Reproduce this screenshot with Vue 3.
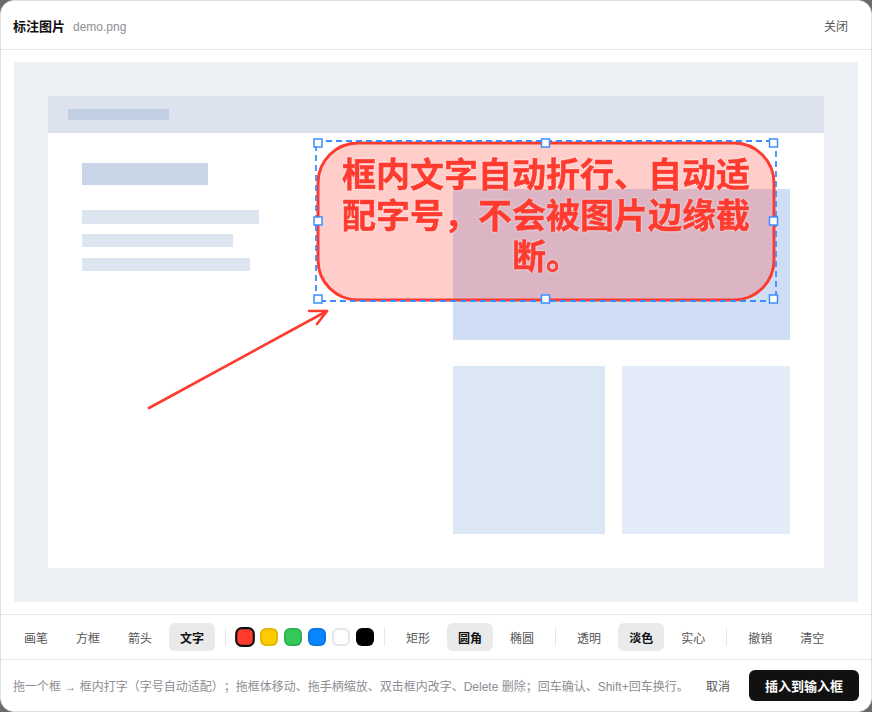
<template>
  <div class="modal">
    <header class="head">
      <div class="title-wrap">
        <span class="title">标注图片</span>
        <span class="file">demo.png</span>
      </div>
      <button class="close">关闭</button>
    </header>

    <div class="body">
      <svg class="stage" viewBox="14 62 844 540" width="844" height="540">
        <rect x="14" y="62" width="844" height="540" fill="#edf1f6" />
        <rect x="48" y="96" width="776" height="472" fill="#fff" />
        <rect x="48" y="96" width="776" height="37" fill="#dce3ee" />
        <rect x="68" y="109" width="101" height="11" fill="#c3cfe2" />
        <rect x="82" y="163" width="126" height="22" fill="#c8d5e7" />
        <rect x="82" y="210" width="177" height="14" fill="#dce5f0" />
        <rect x="82" y="234" width="151" height="13" fill="#dce5f0" />
        <rect x="82" y="258" width="168" height="13" fill="#dce5f0" />
        <rect x="453" y="189" width="337" height="151" fill="#cfdef4" />
        <rect x="453" y="366" width="152" height="168" fill="#dce7f6" />
        <rect x="622" y="366" width="168" height="168" fill="#e4ebf8" />

        <g class="arrow">
          <path d="M149 408 L327 311" />
          <path d="M309 311 L327 311 L317 324" />
        </g>

        <rect class="shape" x="318" y="143" width="456" height="157" rx="40" />
        <text class="label" text-anchor="middle">
          <tspan x="546" y="186.5">框内文字自动折行、自动适</tspan>
          <tspan x="546" y="228">配字号，不会被图片边缘截</tspan>
          <tspan x="546" y="269">断。</tspan>
        </text>

        <rect class="select" x="316" y="141" width="460" height="160" />
        <rect v-for="h in handles" :key="h.x + '-' + h.y" class="handle" :x="h.x - 4" :y="h.y - 4" width="8" height="8" />
      </svg>
    </div>

    <div class="toolbar">
      <button v-for="t in tools" :key="t" class="tool" :class="{ on: t === '文字' }">{{ t }}</button>
      <i class="sep" />
      <div class="swatches">
        <span v-for="c in colors" :key="c.value" class="swatch" :class="{ picked: c.picked }" :style="{ background: c.value }" />
      </div>
      <i class="sep" />
      <button v-for="t in shapes" :key="t" class="tool" :class="{ on: t === '圆角' }">{{ t }}</button>
      <i class="sep" />
      <button v-for="t in fills" :key="t" class="tool" :class="{ on: t === '淡色' }">{{ t }}</button>
      <i class="sep" />
      <button class="tool">撤销</button>
      <button class="tool">清空</button>
    </div>

    <footer class="foot">
      <span class="hint">拖一个框 → 框内打字（字号自动适配）；拖框体移动、拖手柄缩放、双击框内改字、Delete 删除；回车确认、Shift+回车换行。</span>
      <button class="cancel">取消</button>
      <button class="insert">插入到输入框</button>
    </footer>
  </div>
</template>

<script setup>
const tools = ['画笔', '方框', '箭头', '文字']
const shapes = ['矩形', '圆角', '椭圆']
const fills = ['透明', '淡色', '实心']
const colors = [
  { value: '#ff3b30', picked: true },
  { value: '#ffcc00' },
  { value: '#34c759' },
  { value: '#0a84ff' },
  { value: '#ffffff' },
  { value: '#000000' }
]
const handles = [
  { x: 318, y: 143 }, { x: 545.5, y: 143 }, { x: 773.5, y: 143 },
  { x: 318, y: 221 }, { x: 773.5, y: 221 },
  { x: 318, y: 299 }, { x: 545.5, y: 299 }, { x: 773.5, y: 299 }
]
</script>

<style>
html, body { background: #6b6b6b; }
</style>

<style scoped>
.modal {
  width: 872px;
  height: 712px;
  box-sizing: border-box;
  display: flex;
  flex-direction: column;
  background: #fff;
  border: 1px solid #e0e0e2;
  border-radius: 14px;
  overflow: hidden;
  font-family: "Liberation Sans", "Noto Sans CJK SC", sans-serif;
  color: #111;
}
.head {
  height: 49px;
  flex: none;
  box-sizing: border-box;
  display: flex;
  align-items: center;
  justify-content: space-between;
  padding: 0 11px 0 12px;
  border-bottom: 1px solid #e6e7e9;
}
.title-wrap { display: flex; align-items: baseline; gap: 8px; }
.title { font-size: 13px; font-weight: 700; }
.file { font-size: 12px; color: #8e8e93; }
button {
  font-family: inherit;
  border: 0;
  background: none;
  padding: 0;
  cursor: pointer;
}
.close {
  height: 28px;
  padding: 0 12px;
  font-size: 12px;
  color: #555;
}
.body {
  flex: 1;
  padding: 12px 13px;
  min-height: 0;
}
.stage { display: block; }
.arrow path {
  fill: none;
  stroke: #ff3b30;
  stroke-width: 2.6;
  stroke-linecap: round;
  stroke-linejoin: round;
}
.shape {
  fill: rgba(255, 59, 48, 0.25);
  stroke: #ff3b30;
  stroke-width: 3;
}
.label {
  font-family: "Noto Sans CJK SC", sans-serif;
  font-size: 34px;
  font-weight: 700;
  fill: #ff3b30;
  stroke: #ff3b30;
  stroke-width: 0.5px;
  filter: drop-shadow(0 0 1px rgba(255, 255, 255, 0.8));
}
.select {
  fill: none;
  stroke: #3b8eff;
  stroke-width: 1.8;
  stroke-dasharray: 6 4;
}
.handle {
  fill: #fff;
  stroke: #3b8eff;
  stroke-width: 1.5;
}
.toolbar {
  height: 45px;
  flex: none;
  box-sizing: border-box;
  display: flex;
  align-items: center;
  gap: 6px;
  padding: 0 12px;
  border-top: 1px solid #e6e7e9;
}
.tool {
  height: 28px;
  padding: 0 11px;
  border-radius: 6px;
  font-size: 12px;
  color: #555;
}
.tool.on {
  background: #e9eaec;
  color: #111;
  font-weight: 700;
}
.sep {
  width: 1px;
  height: 18px;
  margin: 0 4px;
  background: #e6e7e9;
}
.swatches { display: flex; align-items: center; gap: 6px; }
.swatch {
  width: 18px;
  height: 18px;
  box-sizing: border-box;
  border-radius: 6px;
  border: 2px solid rgba(0, 0, 0, 0.1);
}
.swatch.picked {
  transform: scale(1.1);
  border-color: #111;
}
.foot {
  height: 52px;
  flex: none;
  box-sizing: border-box;
  display: flex;
  align-items: center;
  padding: 0 12px;
  border-top: 1px solid #e6e7e9;
}
.hint {
  flex: 1;
  font-size: 12px;
  color: #8e8e93;
  white-space: nowrap;
  text-spacing-trim: space-all;
}
.cancel {
  height: 31px;
  padding: 0 12px;
  margin-right: 7px;
  font-size: 12px;
  color: #555;
}
.insert {
  width: 110px;
  height: 31px;
  border-radius: 6px;
  background: #111;
  color: #fff;
  font-size: 13px;
  font-weight: 700;
}
</style>
